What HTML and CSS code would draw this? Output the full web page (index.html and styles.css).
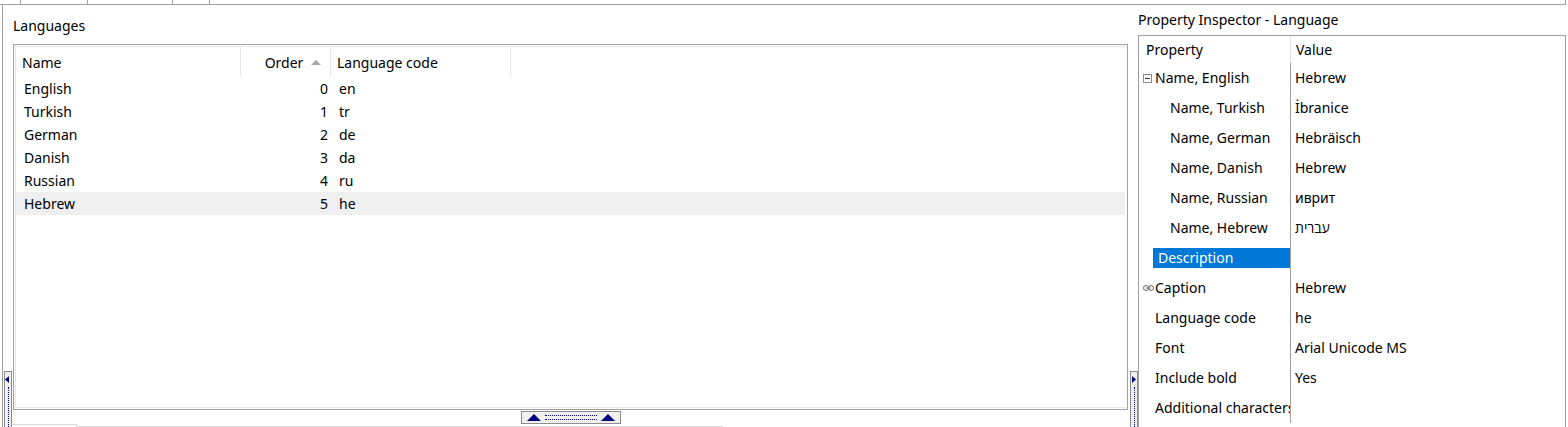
FILE: index.html
```html
<!DOCTYPE html>
<html>
<head>
<meta charset="utf-8">
<link rel="stylesheet" href="styles.css">
</head>
<body>
<div class="top">
  <div class="tick t1"></div><div class="tick t2"></div><div class="tick t3"></div><div class="tick t4"></div>
</div>
<div class="main">
  <div class="rail">
    <div class="handle vhandle">
      <svg width="6" height="8" viewBox="0 0 6 8"><polygon points="4,0 4,7 0,3.5" fill="#000080"/></svg>
      <div class="vdots"></div>
    </div>
  </div>
  <div class="left">
    <div class="title">Languages</div>
    <div class="gridbox">
      <div class="gridinner">
        <div class="ghead">
          <div class="hc c-name">Name</div>
          <div class="hc c-order">Order <svg class="sort" width="10" height="6" viewBox="0 0 10 6"><polygon points="5,0 10,5 0,5" fill="#a8a8a8"/></svg></div>
          <div class="hc c-code">Language code</div>
        </div>
        <div class="grow"><div class="c-name">English</div><div class="c-order">0</div><div class="c-code">en</div></div>
        <div class="grow"><div class="c-name">Turkish</div><div class="c-order">1</div><div class="c-code">tr</div></div>
        <div class="grow"><div class="c-name">German</div><div class="c-order">2</div><div class="c-code">de</div></div>
        <div class="grow"><div class="c-name">Danish</div><div class="c-order">3</div><div class="c-code">da</div></div>
        <div class="grow"><div class="c-name">Russian</div><div class="c-order">4</div><div class="c-code">ru</div></div>
        <div class="grow sel"><div class="c-name">Hebrew</div><div class="c-order">5</div><div class="c-code">he</div></div>
      </div>
    </div>
    <div class="hbar">
      <div class="hhandle">
        <svg width="14" height="7" viewBox="0 0 14 7"><polygon points="7,0 14,7 0,7" fill="#000080"/></svg>
        <div class="hdots"></div>
        <svg width="14" height="7" viewBox="0 0 14 7"><polygon points="7,0 14,7 0,7" fill="#000080"/></svg>
      </div>
    </div>
    <div class="tabs"><div class="tab"></div><div class="tabline"></div></div>
  </div>
  <div class="mid">
    <div class="handle vhandle2">
      <svg width="6" height="8" viewBox="0 0 6 8"><polygon points="1,0 1,7 5,3.5" fill="#000080"/></svg>
      <div class="vdots"></div>
    </div>
  </div>
  <div class="right">
    <div class="title rtitle">Property Inspector - Language</div>
    <div class="pbox">
      <div class="phead">
        <div class="pk">Property</div>
        <div class="pv">Value</div>
      </div>
      <div class="prow"><div class="pk l0"><span class="ico"><svg width="9" height="9" viewBox="0 0 9 9"><rect x="0.5" y="0.5" width="8" height="8" fill="#fff" stroke="#8c8c8c"/><rect x="2" y="4" width="5" height="1" fill="#333"/></svg></span>Name, English</div><div class="pv">Hebrew</div></div>
      <div class="prow"><div class="pk l1">Name, Turkish</div><div class="pv">İbranice</div></div>
      <div class="prow"><div class="pk l1">Name, German</div><div class="pv">Hebräisch</div></div>
      <div class="prow"><div class="pk l1">Name, Danish</div><div class="pv">Hebrew</div></div>
      <div class="prow"><div class="pk l1">Name, Russian</div><div class="pv">иврит</div></div>
      <div class="prow"><div class="pk l1">Name, Hebrew</div><div class="pv">עברית</div></div>
      <div class="prow"><div class="pk l0"><span class="ico"></span><span class="hl">Description</span></div><div class="pv"></div></div>
      <div class="prow"><div class="pk l0"><span class="ico"><svg width="11" height="6" viewBox="0 0 11 6"><rect x="0.5" y="0.5" width="5" height="5" rx="2.5" fill="none" stroke="#6e6e6e"/><rect x="5.5" y="0.5" width="5" height="5" rx="2.5" fill="none" stroke="#6e6e6e"/><rect x="3" y="2.5" width="5" height="1" fill="#6e6e6e"/></svg></span>Caption</div><div class="pv">Hebrew</div></div>
      <div class="prow"><div class="pk l0"><span class="ico"></span>Language code</div><div class="pv">he</div></div>
      <div class="prow"><div class="pk l0"><span class="ico"></span>Font</div><div class="pv">Arial Unicode MS</div></div>
      <div class="prow"><div class="pk l0"><span class="ico"></span>Include bold</div><div class="pv">Yes</div></div>
      <div class="prow"><div class="pk l0"><span class="ico"></span>Additional characters</div><div class="pv"></div></div>
    </div>
  </div>
</div>
</body>
</html>
```
FILE: styles.css
```css
html, body {
  margin: 0;
  padding: 0;
  background: #fff;
  overflow: hidden;
}
body {
  width: 1568px;
  height: 427px;
  font-family: "Noto Sans", "Open Sans", sans-serif;
  font-size: 14px;
  color: #000;
}
.top {
  display: flex;
  width: 1565px;
  height: 4px;
  border-bottom: 1px solid #a0a0a0;
  border-right: 1px solid #a0a0a0;
}
.tick {
  height: 4px;
  border-right: 1px solid #a0a0a0;
}
.t1 { width: 20px; }
.t2 { width: 66px; }
.t3 { width: 84px; }
.t4 { width: 36px; }

.main {
  display: flex;
  height: 422px;
}
.rail {
  width: 10px;
  margin-left: 2px;
  border-left: 1px solid #a0a0a0;
  display: flex;
  flex-direction: column;
  justify-content: flex-end;
}
.handle {
  height: 56px;
  border: 1px solid #8c8c8c;
  border-bottom: none;
  background: #f0f0f0;
  display: flex;
  flex-direction: column;
  align-items: center;
  padding-top: 4px;
  box-sizing: border-box;
  width: 8px;
}
.vhandle { margin-left: 1px; }
.handle svg { display: block; }
.vdots {
  margin-top: 3px;
  width: 0;
  flex: 1;
  border-left: 1px dotted #000080;
}

.left {
  width: 1115px;
  display: flex;
  flex-direction: column;
}
.title {
  height: 39px;
  box-sizing: border-box;
  padding-top: 11px;
  line-height: 20px;
  white-space: nowrap;
}
.gridbox {
  height: 366px;
  box-sizing: border-box;
  border: 1px solid #a0a0a0;
  padding: 1px;
}
.gridinner {
  height: 100%;
  box-sizing: border-box;
  border: 1px solid #e6e6e6;
  border-right: none;
}
.ghead {
  display: flex;
  height: 30px;
  line-height: 31px;
}
.hc {
  height: 29px;
  box-sizing: border-box;
  border-right: 1px solid #e5e5e5;
  white-space: nowrap;
}
.c-name { width: 225px; box-sizing: border-box; padding-left: 8px; }
.c-order { width: 90px; box-sizing: border-box; text-align: right; padding-right: 3px; }
.c-code { width: 180px; box-sizing: border-box; padding-left: 8px; }
.hc.c-name { padding-left: 6px; }
.hc.c-code { padding-left: 6px; }
.hc.c-order { padding-right: 9px; }
.sort { margin-left: 4px; vertical-align: 2px; }
.grow {
  display: flex;
  height: 23px;
  line-height: 24px;
  white-space: nowrap;
}
.grow.sel { background: #efefef; margin-right: 1px; }

.hbar {
  height: 14px;
  display: flex;
  justify-content: center;
  align-items: flex-end;
}
.hhandle {
  width: 100px;
  height: 13px;
  box-sizing: border-box;
  border: 1px solid #8c8c8c;
  background: #f0f0f0;
  display: flex;
  align-items: center;
  padding: 0 5px;
  gap: 4px;
}
.hhandle svg { display: block; }
.hdots {
  flex: 1;
  height: 3px;
  border-top: 1px dotted #000080;
  border-bottom: 1px dotted #000080;
}
.tabs {
  display: flex;
  align-items: flex-end;
  height: 3px;
}
.tab {
  width: 63px;
  height: 2px;
  border-top: 1px solid #d9d9d9;
  border-right: 1px solid #d9d9d9;
}
.tabline {
  width: 646px;
  border-top: 1px solid #d9d9d9;
  height: 0;
}

.mid {
  width: 10px;
  display: flex;
  flex-direction: column;
  justify-content: flex-end;
  align-items: flex-end;
}

.right {
  width: 428px;
  display: flex;
  flex-direction: column;
}
.rtitle {
  height: 30px;
  padding-top: 5px;
}
.pbox {
  flex: 1;
  border: 1px solid #a0a0a0;
  border-bottom: none;
}
.phead {
  display: flex;
  height: 27px;
  line-height: 28px;
}
.phead .pk {
  width: 152px;
  box-sizing: border-box;
  padding-left: 7px;
  border-right: 1px solid #e3e3e3;
}
.phead .pv {
  padding-left: 5px;
}
.prow {
  display: flex;
  height: 30px;
  line-height: 30px;
  white-space: nowrap;
}
.prow .pk {
  width: 152px;
  box-sizing: border-box;
  border-right: 1px solid #a0a0a0;
  overflow: hidden;
  display: flex;
  align-items: center;
}
.prow .pv {
  padding-left: 4px;
}
.pk.l0 { padding-left: 4px; }
.pk.l1 { padding-left: 31px; }
.ico {
  width: 12px;
  height: 30px;
  display: flex;
  align-items: center;
  flex: none;
}
.ico svg { display: block; }
.hl {
  flex: 1;
  align-self: center;
  height: 20px;
  line-height: 20px;
  background: #0078d7;
  color: #fff;
  margin-left: -2px;
  padding-left: 5px;
}
```
